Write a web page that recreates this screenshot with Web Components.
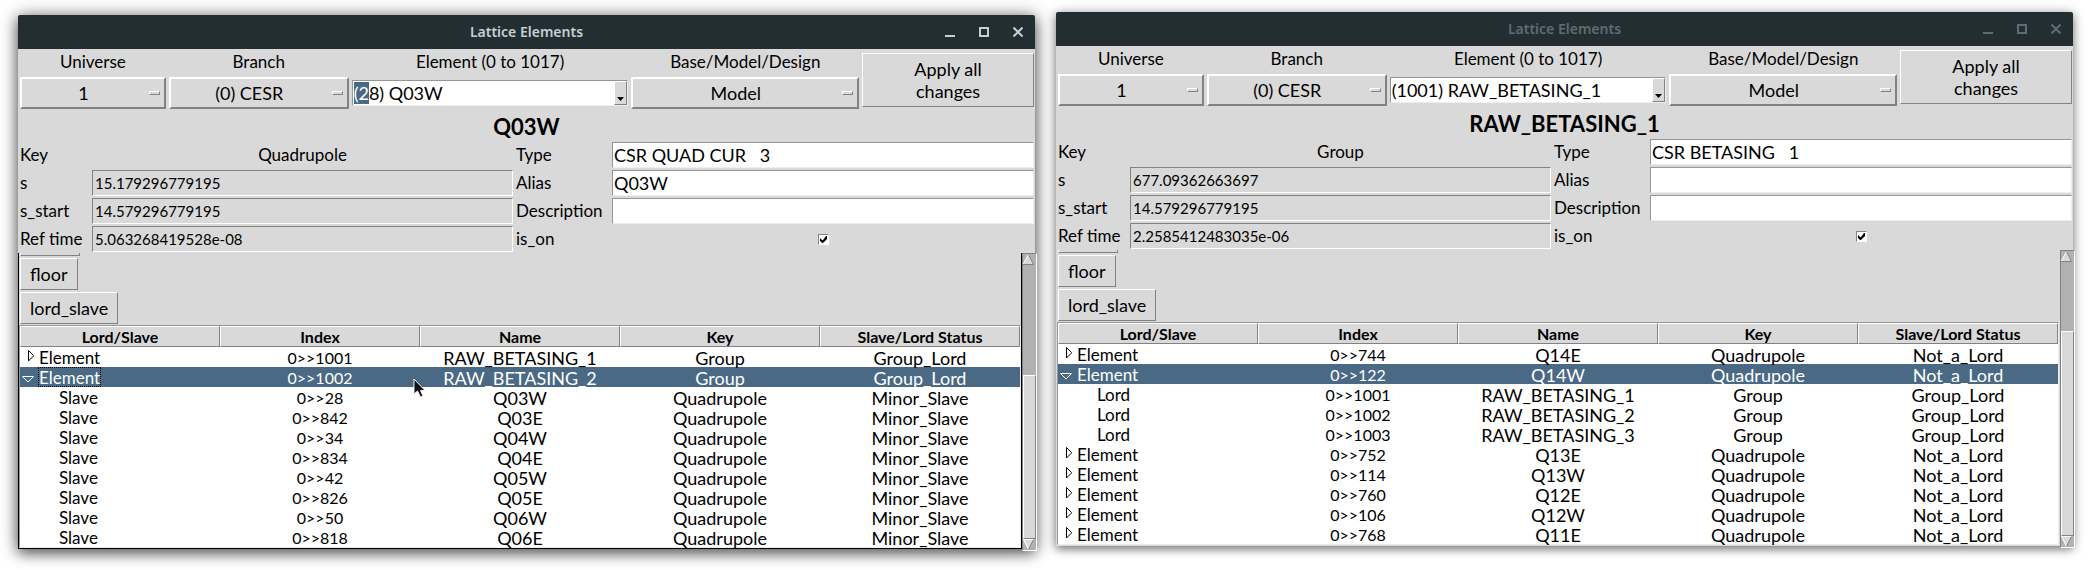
<!DOCTYPE html>
<html lang="en">
<head>
<meta charset="utf-8">
<title>Lattice Elements</title>
<style>
body {
  margin: 0;
  padding: 12px 17px 20px 18px;
  display: grid;
  grid-template-columns: 1fr 1fr;
  align-items: start;
  gap: 21px;
  background: #fff;
  color: #000;
  font: 17px/20px Lato, "Liberation Sans", sans-serif;
}
lattice-window[active] { margin-top: 3px; }
</style>
</head>
<body>
<lattice-window active name="Q03W">
  <tool-row slot="tools" element="(28) Q03W" selected="2"></tool-row>
  <form-field slot="left" label="Key" kind="text" value="Quadrupole"></form-field>
  <form-field slot="left" label="s" kind="readonly" value="15.179296779195"></form-field>
  <form-field slot="left" label="s_start" kind="readonly" value="14.579296779195"></form-field>
  <form-field slot="left" label="Ref time" kind="readonly" value="5.063268419528e-08"></form-field>
  <form-field slot="right" label="Type" value="CSR QUAD CUR   3"></form-field>
  <form-field slot="right" label="Alias" value="Q03W"></form-field>
  <form-field slot="right" label="Description" value=""></form-field>
  <form-field slot="right" label="is_on" kind="check"></form-field>
  <lattice-tree slot="tree" pointer rows="
    + Element|0>>1001|RAW_BETASING_1|Group|Group_Lord;
    - Element|0>>1002|RAW_BETASING_2|Group|Group_Lord;
    . Slave|0>>28|Q03W|Quadrupole|Minor_Slave;
    . Slave|0>>842|Q03E|Quadrupole|Minor_Slave;
    . Slave|0>>34|Q04W|Quadrupole|Minor_Slave;
    . Slave|0>>834|Q04E|Quadrupole|Minor_Slave;
    . Slave|0>>42|Q05W|Quadrupole|Minor_Slave;
    . Slave|0>>826|Q05E|Quadrupole|Minor_Slave;
    . Slave|0>>50|Q06W|Quadrupole|Minor_Slave;
    . Slave|0>>818|Q06E|Quadrupole|Minor_Slave"></lattice-tree>
  <scroll-bar slot="scroll" before="110" thumb="161"></scroll-bar>
</lattice-window>
<lattice-window name="RAW_BETASING_1">
  <tool-row slot="tools" element="(1001) RAW_BETASING_1"></tool-row>
  <form-field slot="left" label="Key" kind="text" value="Group"></form-field>
  <form-field slot="left" label="s" kind="readonly" value="677.09362663697"></form-field>
  <form-field slot="left" label="s_start" kind="readonly" value="14.579296779195"></form-field>
  <form-field slot="left" label="Ref time" kind="readonly" value="2.2585412483035e-06"></form-field>
  <form-field slot="right" label="Type" value="CSR BETASING   1"></form-field>
  <form-field slot="right" label="Alias" value=""></form-field>
  <form-field slot="right" label="Description" value=""></form-field>
  <form-field slot="right" label="is_on" kind="check"></form-field>
  <lattice-tree slot="tree" rows="
    + Element|0>>744|Q14E|Quadrupole|Not_a_Lord;
    - Element|0>>122|Q14W|Quadrupole|Not_a_Lord;
    . Lord|0>>1001|RAW_BETASING_1|Group|Group_Lord;
    . Lord|0>>1002|RAW_BETASING_2|Group|Group_Lord;
    . Lord|0>>1003|RAW_BETASING_3|Group|Group_Lord;
    + Element|0>>752|Q13E|Quadrupole|Not_a_Lord;
    + Element|0>>114|Q13W|Quadrupole|Not_a_Lord;
    + Element|0>>760|Q12E|Quadrupole|Not_a_Lord;
    + Element|0>>106|Q12W|Quadrupole|Not_a_Lord;
    + Element|0>>768|Q11E|Quadrupole|Not_a_Lord"></lattice-tree>
  <scroll-bar slot="scroll" before="69" thumb="202"></scroll-bar>
</lattice-window>

<script>
const base = `
  *, *::before, *::after { box-sizing: border-box; }
  button, input, select { font: inherit; color: inherit; margin: 0; border-radius: 0; outline: 0; appearance: none; }
  .raised { background: #d9d9d9; border: 1px solid; border-color: #fff #828282 #828282 #fff; }
`;
const render = (el, css, html) => {
  el.attachShadow({ mode: 'open' }).innerHTML = `<style>${base}${css}</style>${html}`;
};
const escape = s => s.replace(/&/g, '&amp;').replace(/</g, '&lt;').replace(/>/g, '&gt;').replace(/"/g, '&quot;');

customElements.define('option-menu', class extends HTMLElement {
  connectedCallback() {
    render(this, `
      :host { display: grid; grid-template-rows: 28px 32px; min-width: 0; }
      label { text-align: center; line-height: 26px; }
      .box { position: relative; }
      select {
        width: 100%; height: 32px; padding: 0 19px 0 0; font-size: 18px;
        background: #d9d9d9; border: 2px solid; border-color: #fff #828282 #828282 #fff;
        text-align: center; text-align-last: center;
      }
      .box::after {
        content: ""; position: absolute; right: 6px; top: 14px; width: 11px; height: 4px;
        border: 1px solid; border-color: #fff #828282 #828282 #fff; pointer-events: none;
      }
    `, `<label for="menu">${this.getAttribute('label')}</label>
        <div class="box"><select id="menu"><option>${this.getAttribute('value')}</option></select></div>`);
  }
});

customElements.define('combo-box', class extends HTMLElement {
  connectedCallback() {
    render(this, `
      :host { display: grid; grid-template-rows: 28px 32px; min-width: 0; }
      label { text-align: center; line-height: 26px; }
      .box {
        display: flex; align-self: center; height: 26px; background: #fff;
        border: 1px solid; border-color: #969696 #eee #eee #969696;
      }
      input { flex: 1; min-width: 0; padding: 0 1px; border: 0; background: #fff; font-size: 18px; height: 24px; }
      input::selection { background: #4a6984; color: #fff; }
      button { width: 13px; padding: 0; display: flex; align-items: end; justify-content: center; }
      svg { display: block; margin-bottom: 3px; }
    `, `<label for="entry">Element (0 to 1017)</label>
        <div class="box"><input id="entry" type="text" value="${escape(this.getAttribute('value'))}">
        <button class="raised" aria-label="Show elements"><svg width="7" height="4" viewBox="0 0 7 4"><path d="M0 0H7L3.5 4Z"/></svg></button></div>`);
    const count = Number(this.getAttribute('selected'));
    if (count) {
      const entry = this.shadowRoot.querySelector('input');
      entry.focus();
      entry.setSelectionRange(0, count);
    }
  }
});

customElements.define('tool-row', class extends HTMLElement {
  connectedCallback() {
    render(this, `
      :host {
        display: grid; gap: 3px; padding: 0 1px 0 2px;
        grid-template-columns: 146fr 180fr 277fr 228fr 172fr;
      }
      .apply { margin: 4px 0 2px; padding: 0; font-size: 18px; line-height: 22px; }
    `, `<option-menu label="Universe" value="1"></option-menu>
        <option-menu label="Branch" value="(0) CESR"></option-menu>
        <combo-box value="${escape(this.getAttribute('element'))}" selected="${this.getAttribute('selected') || 0}"></combo-box>
        <option-menu label="Base/Model/Design" value="Model"></option-menu>
        <button class="apply raised">Apply all<br>changes</button>`);
  }
});

customElements.define('form-field', class extends HTMLElement {
  connectedCallback() {
    const kind = this.getAttribute('kind');
    const value = escape(this.getAttribute('value') || '');
    const control = {
      text: `<output id="field">${value}</output>`,
      readonly: `<input id="field" type="text" readonly value="${value}">`,
      check: `<span class="check"><input id="field" type="checkbox" checked><svg width="7" height="7" viewBox="0 0 7 7"><path d="M0 2V5L2 7H3L7 3V0H6L3 4H2Z"/></svg></span>`
    }[kind] || `<input id="field" type="text" value="${value}">`;
    render(this, `
      :host { display: grid; grid-template-columns: var(--label) 1fr; height: 26px; line-height: 26px; }
      output { text-align: center; }
      input[type=text] {
        width: 100%; min-width: 0; height: 26px; padding: 0 1px; font-size: 18px; background: #fff;
        border: 1px solid; border-color: #969696 #eee #eee #969696;
      }
      input[readonly] { padding: 0 2px; font-size: 15px; background: #d9d9d9; border-color: #828282 #fff #fff #828282; }
      .check { position: relative; place-self: center; width: 11px; height: 11px; }
      .check input { display: block; width: 11px; height: 11px; background: #fff; border: 1px solid; border-color: #828282 #fff #fff #828282; }
      .check svg { position: absolute; left: 2px; top: 2px; pointer-events: none; }
    `, `<label for="field">${this.getAttribute('label')}</label>${control}`);
  }
});

customElements.define('lattice-tree', class extends HTMLElement {
  connectedCallback() {
    const marks = {
      '+': '<svg width="8" height="12" viewBox="0 0 8 12"><path d="M1.5 .5V11L6.5 6V5.500Z" fill="#fff" stroke="#000"/></svg>',
      '-': '<svg width="12" height="7" viewBox="0 0 12 7"><path d="M.5 .5H11.5L6 6Z" fill="none" stroke="#fff"/></svg>',
      '.': ''
    };
    const pointer = '<svg class="pointer" width="14" height="21" viewBox="0 0 14 21"><path d="M1 1V16L4.500 13L7.500 19L10 18L7.500 12.500H12Z" fill="#111" stroke="#f4f4f4"/></svg>';
    const rows = this.getAttribute('rows').split(';').map(row => {
      const mark = row.trim()[0];
      const cells = row.trim().slice(2).split('|').map(escape);
      const cls = { '+': 'closed', '-': 'open', '.': 'child' }[mark];
      return `<tr class="${cls}"><td class="first"><div class="item"><span class="mark">${marks[mark]}</span><span class="name">${cells[0]}</span></div></td>
        <td class="index">${cells[1]}${mark === '-' && this.hasAttribute('pointer') ? pointer : ''}</td>
        ${cells.slice(2).map(c => `<td>${c}</td>`).join('')}</tr>`;
    }).join('');
    render(this, `
      :host { display: block; }
      table {
        width: 100%; table-layout: fixed; border-collapse: separate; border-spacing: 0; background: #fff;
        border: 1px solid; border-color: #969696 #eee #eee #969696;
      }
      th { height: 21px; padding: 0; font-size: 16px; line-height: 19px; background: #d9d9d9; border: 1px solid; border-color: #fff #828282 #828282 #fff; }
      td { height: 20px; padding: 2px 0 0; font-size: 18px; line-height: 18px; text-align: center; }
      .first { padding: 0; }
      .index { position: relative; font-size: 16px; }
      .item { display: flex; height: 20px; font-size: 17px; }
      .mark { width: 18px; display: flex; align-items: center; justify-content: center; }
      .closed .mark { padding: 0 0 2px 3px; }
      .open .mark { justify-content: start; padding: 4px 0 0 2px; }
      .child .mark { width: 38px; }
      .name { padding: 2px 1px 0; }
      .open { background: #4a6984; color: #fff; }
      :host([pointer]) .open .name { outline: 1px dotted #000; outline-offset: -1px; }
      .pointer { position: absolute; right: -7px; top: 11px; z-index: 1; }
    `, `<table><thead><tr><th>Lord/Slave</th><th>Index</th><th>Name</th><th>Key</th><th>Slave/Lord Status</th></tr></thead>
        <tbody>${rows}</tbody></table>`);
  }
});

customElements.define('scroll-bar', class extends HTMLElement {
  connectedCallback() {
    render(this, `
      :host {
        display: flex; flex-direction: column; width: 13px; height: 100%; background: #b1b1b1;
        border: 1px solid; border-color: #828282 #fff #fff #828282;
      }
      svg { display: block; flex: none; }
      .before { flex: ${this.getAttribute('before')}; }
      .thumb { flex: ${this.getAttribute('thumb')}; }
    `, `<svg width="11" height="11" viewBox="0 0 11 11"><path d="M5.500 0L11 11H0Z" fill="#d9d9d9"/><path d="M0 10.500L5.500 .5" stroke="#fff" fill="none"/><path d="M5.500 .5L10.500 10.500H0" stroke="#828282" fill="none"/></svg>
        <div class="before"></div><div class="thumb raised"></div>
        <svg width="11" height="11" viewBox="0 0 11 11"><path d="M0 0H11L5.500 11Z" fill="#d9d9d9"/><path d="M11 .5H.5L5.500 10.500" stroke="#fff" fill="none"/><path d="M5.500 10.500L10.500 .5" stroke="#828282" fill="none"/></svg>`);
  }
});

customElements.define('lattice-window', class extends HTMLElement {
  connectedCallback() {
    render(this, `
      :host {
        --chrome: #5f6b70; --ring: #d9d9d9;
        display: block; min-width: 0; background: #d9d9d9; border-radius: 2px 2px 0 0;
        box-shadow: 0 3px 10px rgba(0,0,0,.5), 0 0 14px rgba(0,0,0,.15);
      }
      :host([active]) {
        --chrome: #c4d0d3; --ring: #000;
        box-shadow: 0 4px 14px rgba(0,0,0,.6), 0 0 20px rgba(0,0,0,.3);
      }
      header {
        display: grid; grid-template-columns: 102px 1fr 102px; height: 34px; background: #232e33;
        color: var(--chrome); border-radius: 2px 2px 0 0;
      }
      h1 { grid-column: 2; margin: 0; text-align: center; font: 600 14px/34px "Noto Sans", sans-serif; }
      nav { display: flex; }
      nav button { flex: 1; padding: 0; border: 0; background: none; display: grid; place-items: center; }
      nav svg { display: block; fill: none; stroke: var(--chrome); stroke-width: 2; }
      h2 { margin: 0; padding-top: 2px; text-align: center; font-size: 22px; line-height: 31px; }
      .fields { display: grid; grid-template-columns: calc(50% - 14px) 1fr; gap: 3px; padding: 0 1px 0 2px; }
      .column { display: grid; gap: 2px; min-width: 0; }
      .left { --label: 72px; }
      .right { --label: 96px; }
      .scroller { display: grid; grid-template-columns: 1fr 13px; margin-top: 1px; }
      .canvas { min-width: 0; border: 1px solid var(--ring); border-top: 0; }
      .sections { display: grid; justify-items: start; gap: 2px; padding: 0 1px 1px; }
      .sections button { height: 32px; padding: 0 9px; font-size: 18px; }
      .previous { width: 60px; height: 3px; border-top: 0; }
    `, `<header><h1>Lattice Elements</h1>
          <nav>
            <button aria-label="Minimize"><svg width="10" height="10"><path d="M0 9H10"/></svg></button>
            <button aria-label="Maximize"><svg width="10" height="10"><path d="M1 1H9V9H1Z"/></svg></button>
            <button aria-label="Close"><svg width="10" height="10"><path d="M.5 .5L9.500 9.500M9.500 .5L.5 9.500"/></svg></button>
          </nav></header>
        <slot name="tools"></slot>
        <h2>${this.getAttribute('name')}</h2>
        <div class="fields">
          <div class="column left"><slot name="left"></slot></div>
          <div class="column right"><slot name="right"></slot></div>
        </div>
        <div class="scroller">
          <div class="canvas">
            <div class="sections">
              <div class="previous raised"></div>
              <button class="raised">floor</button>
              <button class="raised">lord_slave</button>
            </div>
            <slot name="tree"></slot>
          </div>
          <slot name="scroll"></slot>
        </div>`);
  }
});
</script>
</body>
</html>
